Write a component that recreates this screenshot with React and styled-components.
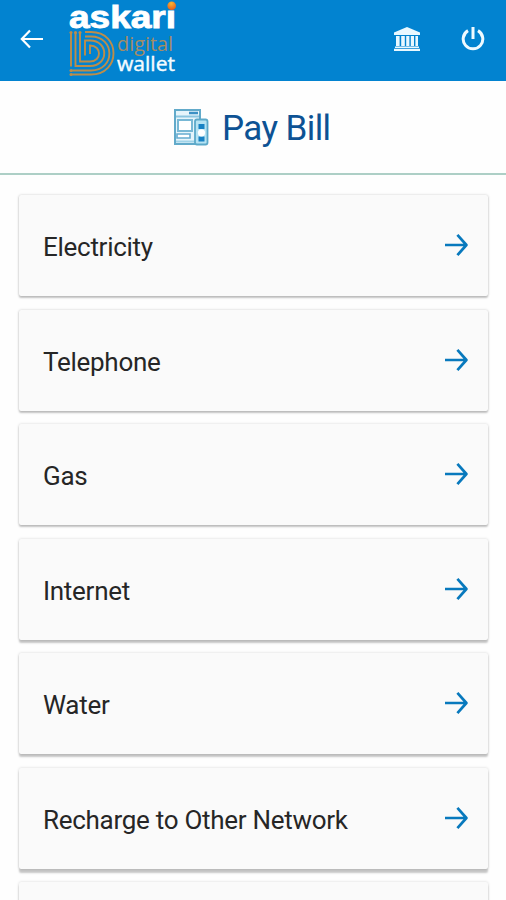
import React from 'react';

import styled, { createGlobalStyle } from 'styled-components';

const GlobalStyle = createGlobalStyle`
  * {
    box-sizing: border-box;
  }
  body {
    margin: 0;
    background-color: #ffffff;
    font-family: Roboto, sans-serif;
  }
`;

const Screen = styled.div`
  height: 900px;
  overflow: hidden;
  display: flex;
  flex-direction: column;
  background-color: #fefefe;
`;

const AppBar = styled.header`
  flex: none;
  height: 81px;
  display: flex;
  align-items: flex-start;
  background-color: #0283d0;
`;

const IconButton = styled.button`
  flex: none;
  width: ${({ $width }) => $width}px;
  height: 78px;
  padding: 0;
  border: none;
  background: none;
  display: flex;
  align-items: center;
  justify-content: center;
`;

const BarActions = styled.div`
  display: flex;
  margin-left: auto;
`;

const Title = styled.div`
  flex: none;
  height: 94px;
  padding: 0 0 0 173px;
  display: flex;
  align-items: center;
  gap: 13px;
  border-bottom: 2px solid #adcfc6;
`;

const TitleText = styled.h1`
  margin: 0;
  padding-top: 4px;
  font-size: 35px;
  line-height: 42px;
  font-weight: 400;
  letter-spacing: -0.6px;
  color: #0d5294;
`;

const BillList = styled.ul`
  list-style: none;
  margin: 0;
  padding: 20px 18px 0 19px;
  display: flex;
  flex-direction: column;
  gap: 13.5px;
`;

const BillCard = styled.li`
  flex: none;
  height: 101px;
  padding: 0 20px 1px 24px;
  display: flex;
  align-items: center;
  justify-content: space-between;
  border-radius: 2px;
  background-color: #fafafa;
  box-shadow: 0 ${({ $depth }) => $depth}px 2px rgba(0, 0, 0, 0.22),
    0 0 3px rgba(0, 0, 0, 0.16);
`;

const BillName = styled.span`
  font-size: 26px;
  line-height: 32px;
  padding-top: 4px;
  letter-spacing: -0.28px;
  color: #262626;
`;

const BackIcon = () => (
  <svg width='24' height='20' viewBox='0 0 24 20' fill='none'>
    <path d='M10 1.5 1.8 10l8.2 8.5M2 10h21' stroke='#fff' strokeWidth='2.2' />
  </svg>
);

const BankIcon = () => (
  <svg width='28' height='24' viewBox='0 0 28 24' fill='#e9f8ff'>
    <path d='M14 0 27 5.6V8H1V5.6z' />
    <path d='M3 9h3.6v10H3zM8.2 9h3.6v10H8.2zM13.2 9h3.2v10h-3.2zM17.8 9h3.2v10h-3.2zM22.4 9H25v10h-2.6z' />
    <path d='M2 19.5h24v1.6H2zM1 21.8h26V24H1z' />
  </svg>
);

const PowerIcon = () => (
  <svg width='24' height='26' viewBox='0 0 24 26' fill='none'>
    <path
      d='M7 4.6a9.8 9.8 0 1 0 10 0M12 1v12'
      stroke='#effaff'
      strokeWidth='3'
    />
  </svg>
);

const ArrowIcon = () => (
  <svg width='24' height='24' viewBox='0 0 24 24' fill='none'>
    <path
      d='M1 12h21M13.4 1.8l9 10.2-9 10.2'
      stroke='#0879bd'
      strokeWidth='2.7'
      strokeLinejoin='round'
    />
  </svg>
);

const Logo = () => (
  <svg width='116' height='80' viewBox='-4 0 116 80'>
    <defs>
      <radialGradient id='dot' cx='45%' cy='25%' r='70%'>
        <stop offset='0' stopColor='#f7b733' />
        <stop offset='1' stopColor='#e8601c' />
      </radialGradient>
    </defs>
    <text
      x='1'
      y='27.5'
      fontFamily='Liberation Sans, Arial, sans-serif'
      fontSize='32'
      fontWeight='700'
      fill='#fff'
      stroke='#fff'
      strokeWidth='0.9'
      textLength='107'
      lengthAdjust='spacingAndGlyphs'
    >
      askarı
    </text>
    <circle cx='103.7' cy='5.7' r='4.3' fill='url(#dot)' />
    <g fill='none' stroke='#bd8d49' strokeWidth='1.9'>
      <path d='M3 32v34.5M7.5 32v34h14.5c19 0 19-25.5 0-25.5H17v15' />
      <path d='M12 32v29.5h10c12 0 12-16 0-16V54' />
      <path d='M17 36.5h6c24.500 0 24.500 34 0 34H3' />
      <path d='M17 32h6c30 0 30 42.500 0 42.500H3' />
    </g>
    <g fill='#bd8d49'>
      <circle cx='3' cy='32.5' r='1.5' />
      <circle cx='7.5' cy='32.5' r='1.5' />
      <circle cx='12' cy='32.5' r='1.5' />
      <circle cx='3' cy='70.5' r='1.5' />
      <circle cx='3' cy='74.5' r='1.5' />
    </g>
    <text
      x='49'
      y='51'
      fontFamily='Open Sans, sans-serif'
      fontSize='20'
      fontWeight='400'
      fill='#a58c65'
      textLength='56'
      lengthAdjust='spacingAndGlyphs'
    >
      digital
    </text>
    <text
      x='49'
      y='71'
      fontFamily='Open Sans, sans-serif'
      fontSize='20'
      fontWeight='500'
      fill='#f4fbff'
      stroke='#f4fbff'
      strokeWidth='0.4'
      textLength='58'
      lengthAdjust='spacingAndGlyphs'
    >
      wallet
    </text>
  </svg>
);

const BillIcon = () => (
  <svg width='36' height='38' viewBox='0 0 36 38' fill='none'>
    <path d='M2 2h25v34H2z' fill='#e6f5fb' stroke='#62aaca' strokeWidth='2' />
    <path d='M3 8.5h23' stroke='#8cc6e0' strokeWidth='2' />
    <path d='M16 5h9' stroke='#3b91c5' strokeWidth='2.5' />
    <path d='M5 12h14v11H5z' fill='#fff' stroke='#78b8d5' strokeWidth='2' />
    <path d='M4 26h13v4H4z' fill='#fff' stroke='#67acd0' strokeWidth='1.6' />
    <path d='M3 33.5h19' stroke='#a0d3e8' strokeWidth='2' />
    <rect
      x='22'
      y='11.5'
      width='12.5'
      height='25'
      rx='2'
      fill='#b6e3f3'
      stroke='#5ca9c9'
      strokeWidth='1.8'
    />
    <path d='M25.5 18.5h6M25.5 31h6' stroke='#1882c4' strokeWidth='5' />
    <circle cx='28.5' cy='24.8' r='3.6' fill='#fff' />
  </svg>
);

const bills = [
  'Electricity',
  'Telephone',
  'Gas',
  'Internet',
  'Water',
  'Recharge to Other Network',
  '',
];

const App = () => (
  <Screen>
    <GlobalStyle />
    <AppBar>
      <IconButton $width={64} aria-label='Back'>
        <BackIcon />
      </IconButton>
      <Logo />
      <BarActions>
        <IconButton $width={67} aria-label='Branches'>
          <BankIcon />
        </IconButton>
        <IconButton $width={66} aria-label='Log out'>
          <PowerIcon />
        </IconButton>
      </BarActions>
    </AppBar>
    <Title>
      <BillIcon />
      <TitleText>Pay Bill</TitleText>
    </Title>
    <BillList>
      {bills.map((bill, i) => (
        <BillCard key={`bill-${i}`} $depth={1.2 + i * 0.4}>
          <BillName>{bill}</BillName>
          <ArrowIcon />
        </BillCard>
      ))}
    </BillList>
  </Screen>
);

export default App;
